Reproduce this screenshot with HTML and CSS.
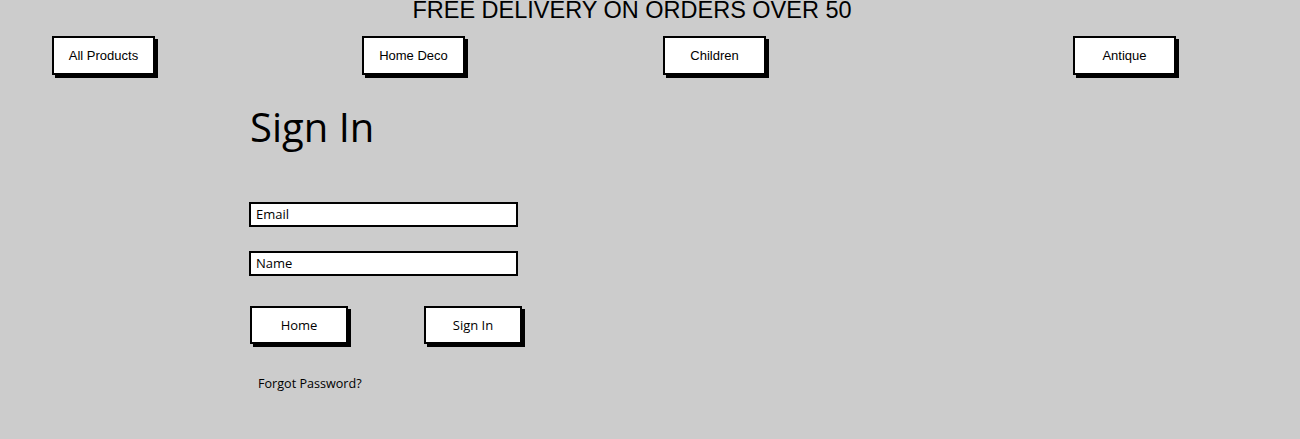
FILE: index.html
```html
<!DOCTYPE html>
<html lang="en">
<head>
  <meta charset="UTF-8">
  <meta name="viewport" content="width=device-width, initial-scale=1.0">
  <title>Sign In</title>
  <link rel="stylesheet" href="styles.css">
</head>
<body>
  <div class="banner">FREE DELIVERY ON ORDERS OVER 50</div>

  <div class="nav">
    <a class="nav-btn" href="#">All Products</a>
    <a class="nav-btn deco" href="#">Home Deco</a>
    <a class="nav-btn children" href="#">Children</a>
    <a class="nav-btn antique" href="#">Antique</a>
  </div>

  <div class="signin">
    <h1>Sign In</h1>

    <div class="field email">Email</div>
    <div class="field">Name</div>

    <div class="actions">
      <a class="btn" href="#">Home</a>
      <a class="btn" href="#">Sign In</a>
    </div>

    <a class="forgot" href="#">Forgot Password?</a>
  </div>
</body>
</html>
```

FILE: styles.css
```css
body {
  margin: 0;
  background-color: #cccccc;
  color: #000;
  font-family: "Open Sans", sans-serif;
}

a {
  color: #000;
  text-decoration: none;
}

.banner {
  width: 1264px;
  text-align: center;
  font-family: "Liberation Sans", Arial, sans-serif;
  font-size: 23.5px;
  line-height: 20px;
  height: 20px;
}

.nav {
  display: flex;
  margin-top: 16px;
  padding-left: 52px;
}

.nav-btn {
  box-sizing: border-box;
  width: 103px;
  height: 39px;
  display: flex;
  justify-content: center;
  align-items: center;
  background-color: #fff;
  border: 2px solid #000;
  box-shadow: 3px 3px 0 #000;
  font-family: "Liberation Sans", Arial, sans-serif;
  font-size: 13px;
}

.nav-btn.deco {
  margin-left: 207px;
}

.nav-btn.children {
  margin-left: 198px;
}

.nav-btn.antique {
  margin-left: 307px;
}

.signin {
  padding-left: 249px;
  margin-top: 29px;
}

h1 {
  margin: 0;
  font-size: 40px;
  font-weight: normal;
  line-height: 46px;
  padding-left: 1px;
}

.field {
  box-sizing: border-box;
  width: 269px;
  height: 25px;
  margin-top: 52px;
  padding-left: 5px;
  background-color: #fff;
  border: 2px solid #000;
  font-size: 13px;
  line-height: 21px;
}

.field + .field {
  margin-top: 24px;
}

.actions {
  display: flex;
  gap: 76px;
  margin-top: 30px;
  padding-left: 1px;
}

.btn {
  box-sizing: border-box;
  width: 98px;
  height: 38px;
  display: flex;
  justify-content: center;
  align-items: center;
  background-color: #fff;
  border: 2px solid #000;
  box-shadow: 3px 3px 0 #000;
  font-size: 13px;
}

.forgot {
  display: inline-block;
  margin-top: 31px;
  margin-left: 9px;
  font-size: 12.6px;
  line-height: 18px;
}
```
